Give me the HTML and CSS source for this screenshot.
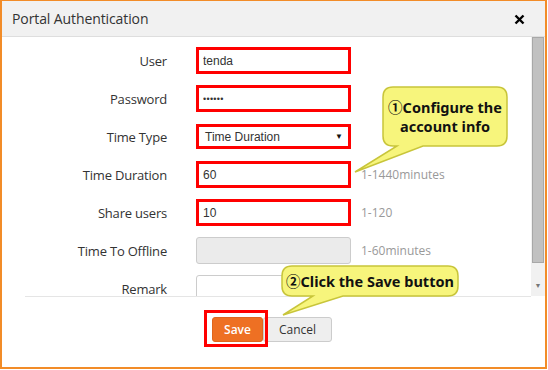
FILE: index.html
```html
<!DOCTYPE html>
<html lang="en">
  <head>
    <meta charset="UTF-8" />
    <title>Portal Authentication</title>
    <link rel="stylesheet" href="styles.css">
  </head>
  <body>
    <div class="dialog">
      <div class="dialog-header">
        <h2>Portal Authentication</h2>
        <svg class="close" width="11" height="11" viewBox="0 0 11 11">
          <path d="M1.5 1.5 L9.5 9.5 M9.5 1.5 L1.5 9.5" stroke="#000" stroke-width="2.4" />
        </svg>
      </div>

      <div class="dialog-body">
        <div class="form">
          <label>User</label>
          <input class="field marked" type="text" value="tenda">
          <span class="hint"></span>

          <label>Password</label>
          <input class="field marked pwd" type="password" value="123456">
          <span class="hint"></span>

          <label>Time Type</label>
          <div class="field select marked">Time Duration<span class="caret">&#9660;</span></div>
          <span class="hint"></span>

          <label>Time Duration</label>
          <input class="field marked" type="text" value="60">
          <span class="hint">1-1440minutes</span>

          <label>Share users</label>
          <input class="field marked" type="text" value="10">
          <span class="hint">1-120</span>

          <label>Time To Offline</label>
          <input class="field disabled" type="text" value="" disabled>
          <span class="hint">1-60minutes</span>

          <label>Remark</label>
          <input class="field" type="text" value="">
          <span class="hint"></span>
        </div>
        <div class="scrollbar">
          <div class="thumb"></div>
          <div class="arrow">&#9660;</div>
        </div>
      </div>

      <div class="dialog-footer">
        <button class="btn btn-save">Save</button>
        <button class="btn btn-cancel">Cancel</button>
      </div>
    </div>

    <!-- annotation callouts -->
    <svg class="bubble bubble-one" width="162" height="92" viewBox="0 0 162 92">
      <path d="M43,3 H147 Q157,3 157,13 V52 Q157,62 147,62 H73 L5,88 L47,62 H43 Q33,62 33,52 V13 Q33,3 43,3 Z" />
    </svg>
    <div class="bubble-text text-one">&#9312;Configure the<br>account info</div>

    <svg class="bubble bubble-two" width="184" height="58" viewBox="0 0 184 58">
      <path d="M14,4 H170 Q180,4 180,14 V24 Q180,34 170,34 H65 L5,53 L35,34 H14 Q4,34 4,24 V14 Q4,4 14,4 Z" />
    </svg>
    <div class="bubble-text text-two">&#9313;Click the Save button</div>
  </body>
</html>
```

FILE: styles.css
```css
* {
  margin: 0;
  padding: 0;
  box-sizing: border-box;
}
body {
  font-family: "Open Sans", "Liberation Sans", sans-serif;
  background: #fff;
  width: 548px;
  height: 370px;
  overflow: hidden;
}
.dialog {
  width: 547px;
  height: 369px;
  border: 2px solid #f28c28;
  border-width: 1px 2px 2px 2px;
  display: flex;
  flex-direction: column;
  background: #fff;
}
.dialog-header {
  height: 36px;
  background: #f1f1f1;
  border-bottom: 1px solid #dedede;
  display: flex;
  align-items: center;
  justify-content: space-between;
  padding: 0 20px 0 10px;
}
.dialog-header h2 {
  font-size: 14px;
  font-weight: 400;
  color: #333;
  letter-spacing: -0.1px;
}
.close {
  display: block;
  margin-top: 2px;
}
.dialog-body {
  height: 259px;
  display: flex;
  overflow: hidden;
}
.form {
  flex: 1;
  display: grid;
  grid-template-columns: 165px 155px auto;
  column-gap: 29px;
  row-gap: 11px;
  align-items: center;
  padding-top: 10px;
  grid-auto-rows: 27px;
}
.form label {
  text-align: right;
  font-size: 13px;
  color: #333;
  letter-spacing: -0.2px;
}
.field {
  width: 155px;
  height: 27px;
  border: 1px solid #ccc;
  border-radius: 3px;
  padding: 0 6px;
  font-family: "Liberation Sans", Arial, sans-serif;
  font-size: 12px;
  color: #333;
  background: #fff;
  outline: none;
}
.field.marked {
  outline: 3px solid #f00;
  outline-offset: -3px;
  border-radius: 0;
}
.field.pwd {
  font-size: 9px;
  letter-spacing: 0.3px;
}
.field.disabled {
  background: #ebebeb;
}
.select {
  display: flex;
  align-items: center;
  justify-content: space-between;
  padding: 0 7px 0 8px;
  height: 25px;
}
.caret {
  font-size: 8px;
  color: #111;
}
.hint {
  font-size: 12px;
  color: #999;
  margin-left: -19px;
}
.scrollbar {
  width: 14px;
  background: #f1f1f1;
  display: flex;
  flex-direction: column;
  padding: 0 1px;
}
.thumb {
  height: 226px;
  background: #c1c1c1;
  border: 1px solid #a8a8a8;
}
.arrow {
  font-size: 7px;
  color: #777;
  text-align: center;
  margin-top: 18px;
}
.dialog-footer {
  flex: 1;
  margin: 0 14px 0 23px;
  border-top: 1px solid #e5e5e5;
  padding: 20px 0 0 187px;
  display: flex;
  align-items: flex-start;
}
.btn {
  height: 25px;
  border-radius: 3px;
  font-family: "Open Sans", "Liberation Sans", sans-serif;
  font-size: 12px;
  cursor: pointer;
}
.btn-save {
  position: relative;
  width: 51px;
  background: #ee7023;
  border: 1px solid #e0651c;
  color: #fff;
  font-weight: 600;
}
.btn-save::after {
  content: "";
  position: absolute;
  left: -9px;
  top: -8px;
  right: -6px;
  bottom: -6px;
  border: 3px solid #f00;
}
.btn-cancel {
  width: 69px;
  background: #eee;
  border: 1px solid #ccc;
  color: #333;
}
.bubble {
  position: absolute;
}
.bubble path {
  fill: #f7f57c;
  stroke: #c8c53a;
  stroke-width: 1.5;
}
.bubble-one {
  left: 350px;
  top: 84px;
}
.bubble-two {
  left: 278px;
  top: 262px;
}
.bubble-text {
  position: absolute;
  display: flex;
  align-items: center;
  justify-content: center;
  text-align: center;
  font-family: "Noto Sans", "Noto Sans CJK SC", sans-serif;
  font-weight: 700;
  font-size: 14.5px;
  line-height: 19px;
  color: #111;
}
.text-one {
  left: 383px;
  top: 87px;
  width: 124px;
  height: 59px;
}
.text-two {
  left: 282px;
  top: 266px;
  width: 176px;
  height: 30px;
}
```
